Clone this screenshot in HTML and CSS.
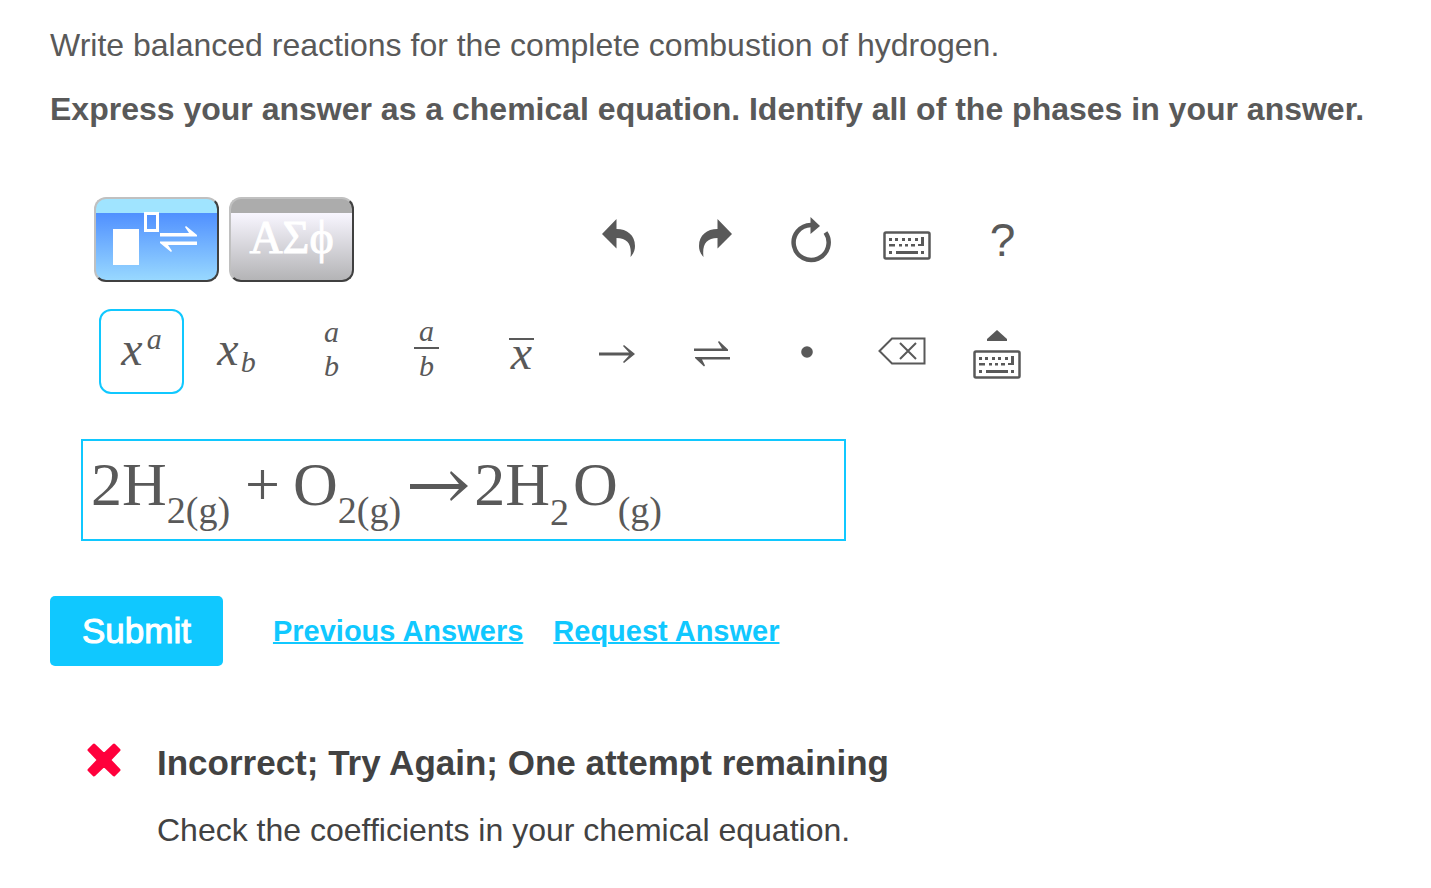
FILE: index.html
```html
<!DOCTYPE html>
<html lang="en">
<head>
    <meta charset="utf-8">
    <title>Combustion of hydrogen</title>
    <link rel="stylesheet" href="styles.css">
</head>
<body>
    <svg class="symbols" width="0" height="0" aria-hidden="true">
        <symbol id="keyboard" viewBox="0 0 48 29">
            <rect x="1.500" y="1.500" width="45" height="26" rx="1.500" fill="none" stroke="currentColor" stroke-width="2.500"/>
            <path fill="currentColor" d="M6 7h3v3H6zM12 7h3v3h-3zM19 7h3v3h-3zM25 7h3v3h-3zM32 7h3v3h-3zM38 6h3v9h-6v-2h3zM6 13h6v2.500H6zM16 13h3v2.500h-3zM22 13h3v2.500h-3zM28 13h4v2.500h-4zM6 20h3v3H6zM13 20h22v3H13zM38 20h3v3h-3z"/>
        </symbol>
    </svg>

    <p class="question">Write balanced reactions for the complete combustion of hydrogen.</p>
    <p class="instructions">Express your answer as a chemical equation. Identify all of the phases in your answer.</p>

    <form onsubmit="event.preventDefault()">
        <div class="toolbar palettes">
            <button type="button" class="palette palette-active" aria-label="Templates">
                <svg width="121" height="81" viewBox="0 0 121 81">
                    <path fill="#fff" d="M17 30h26v36H17z"/>
                    <rect x="49.500" y="14.500" width="12" height="17" fill="none" stroke="#fff" stroke-width="3"/>
                    <path fill="#fff" d="M64 34h29l-4-6 1-1 11 9v1.500H64zM101 46H72l4 6-1 1-11-9v-1.500h37z"/>
                </svg>
            </button>
            <button type="button" class="palette greek">ΑΣϕ</button>
            <div class="actions">
                <button type="button" class="tool" aria-label="Undo">
                    <svg width="34" height="42" viewBox="0 0 34 42"><path fill="currentColor" d="M0 15 14.500 0v10C25 10 33 16 33 27c0 4-1 7-4.500 11C30 26 26 19 14.500 19v10.500z"/></svg>
                </button>
                <button type="button" class="tool" aria-label="Redo">
                    <svg width="34" height="42" viewBox="0 0 34 42"><path fill="currentColor" d="M34 15 19.500 0v10C9 10 1 16 1 27c0 4 1 7 4.500 11C4 26 8 19 19.500 19v10.500z"/></svg>
                </button>
                <button type="button" class="tool" aria-label="Reset">
                    <svg width="40" height="46" viewBox="0 0 40 46">
                        <path fill="none" stroke="currentColor" stroke-width="4.500" d="M20 8A17.500 17.500 0 1 0 34.500 15.500"/>
                        <path fill="currentColor" d="M19.500 0 29 9l-9.500 8z"/>
                    </svg>
                </button>
                <button type="button" class="tool" aria-label="Keyboard shortcuts">
                    <svg class="keyboard-icon" width="48" height="29"><use href="#keyboard"/></svg>
                </button>
                <button type="button" class="tool help">?</button>
            </div>
        </div>

        <div class="toolbar templates">
            <button type="button" class="tool math selected"><i>x</i><i class="script above">a</i></button>
            <button type="button" class="tool math"><i>x</i><i class="script below">b</i></button>
            <button type="button" class="tool math stack"><i>a</i><i>b</i></button>
            <button type="button" class="tool math stack fraction"><i>a</i><i>b</i></button>
            <button type="button" class="tool"><i class="bar">x</i></button>
            <button type="button" class="tool arrow" aria-label="Reaction arrow">
                <svg width="36" height="18" viewBox="0 0 36 18"><path fill="currentColor" d="M0 7.500h30L24 1l1-1 11 9-11 9-1-1 6-6.500H0z"/></svg>
            </button>
            <button type="button" class="tool arrow" aria-label="Equilibrium arrows">
                <svg width="36" height="26" viewBox="0 0 36 26"><path fill="currentColor" d="M0 7.500h28L24 1l1-1 9 8.500v1.500H0zM36 18.500H8l3 6-1 1-9-8.500v-1h35z"/></svg>
            </button>
            <button type="button" class="tool" aria-label="Dot">
                <svg width="12" height="12" viewBox="0 0 12 12"><circle cx="6" cy="6" r="5.800" fill="currentColor"/></svg>
            </button>
            <button type="button" class="tool" aria-label="Delete">
                <svg width="48" height="30" viewBox="0 0 48 30"><path fill="none" stroke="currentColor" stroke-width="2" d="M1.500 14 14 1.500h32.500v25H14zM22 6l16 16M38 6 22 22"/></svg>
            </button>
            <button type="button" class="tool keyboard-toggle" aria-label="Show keyboard">
                <svg width="20" height="11" viewBox="0 0 20 11"><path fill="currentColor" d="M10 0 20 9v2H0V9z"/></svg>
                <svg width="48" height="29"><use href="#keyboard"/></svg>
            </button>
        </div>

        <div class="answer" role="textbox" aria-label="Answer" contenteditable="true" spellcheck="false"><span>2H<sub>2(g)</sub></span><span class="plus">+</span><span>O<sub>2(g)</sub></span><svg class="yields" width="58" height="30" viewBox="0 0 58 30"><path fill="currentColor" d="M0 13h49l-9-11 1-2 17 15-17 15-1-2 9-10H0z"/></svg><span>2H<sub class="low">2</sub>O<sub>(g)</sub></span></div>

        <div class="submit-row">
            <button type="submit" class="submit">Submit</button>
            <a href="#previous">Previous Answers</a>
            <a href="#request">Request Answer</a>
        </div>
    </form>

    <div class="feedback">
        <svg class="cross" width="34" height="34" viewBox="0 0 34 34"><path fill="#ff003c" stroke="#ff003c" stroke-width="3" stroke-linejoin="round" d="m7 2 10 9.500L27 2l5 5-9.500 10L32 27l-5 5-10-9.500L7 32l-5-5 9.500-10L2 7z"/></svg>
        <div>
            <h2>Incorrect; Try Again; One attempt remaining</h2>
            <p>Check the coefficients in your chemical equation.</p>
        </div>
    </div>
</body>
</html>
```

FILE: styles.css
```css
body {
    margin: 0;
    padding: 25px 0 36px 50px;
    font-family: "Liberation Sans", Arial, sans-serif;
    color: #595959;
    background-color: #fff;
}

p,
h2 {
    margin: 0;
    line-height: 40px;
}

.symbols {
    display: block;
}

.question {
    font-size: 32px;
}

.instructions {
    margin-top: 24px;
    font-size: 32px;
    font-weight: bold;
}

button {
    padding: 0;
    border: none;
    background: none;
    color: inherit;
    cursor: pointer;
}

.toolbar {
    display: flex;
    align-items: center;
    gap: 10px;
}

.palettes {
    margin: 68px 0 0 44px;
}

.palette {
    box-sizing: border-box;
    width: 125px;
    height: 85px;
    border: 2px solid;
    border-color: #c0c0c0 #404040 #404040 #c0c0c0;
    border-radius: 12px;
    background: linear-gradient(#acacac 14px, #f8f6ff 14px, #b4b4b6);
    overflow: hidden;
}

.palette svg {
    display: block;
}

.palette-active {
    background: linear-gradient(#a0e4ff 14px, #5090ff 14px, #98d8ff);
}

.greek {
    padding-bottom: 4px;
    font-family: "Liberation Serif", "Times New Roman", serif;
    font-size: 46px;
    line-height: 76px;
    color: #fff;
    -webkit-text-stroke: 1px;
}

.actions {
    display: flex;
    gap: 11px;
    margin-left: 212px;
}

.tool {
    display: flex;
    justify-content: center;
    align-items: center;
    box-sizing: border-box;
    width: 85px;
    height: 85px;
    border-radius: 12px;
    font-family: "Liberation Serif", "Times New Roman", serif;
    font-size: 48px;
    line-height: 48px;
}

.help {
    font-family: "Liberation Sans", Arial, sans-serif;
    font-size: 46px;
}

.keyboard-icon {
    margin-top: 12px;
}

.templates {
    margin: 27px 0 0 49px;
}

.math {
    padding-bottom: 6px;
}

.selected {
    border: 2px solid #10c8ff;
}

.script {
    font-size: 30px;
}

.above {
    padding: 0 0 20px 4px;
}

.below {
    padding: 26px 0 0 2px;
}

.stack {
    flex-direction: column;
    font-size: 30px;
    line-height: 34px;
}

.fraction i:first-child {
    width: 25px;
    box-sizing: border-box;
    height: 34px;
    border-bottom: 2px solid;
    line-height: 32px;
}

.bar {
    width: 25px;
    border-top: 2px solid;
    line-height: 25px;
}

.arrow {
    padding-top: 5px;
}

.keyboard-toggle {
    flex-direction: column;
    gap: 9px;
    padding-top: 5px;
}

.answer {
    display: flex;
    align-items: center;
    box-sizing: border-box;
    width: 765px;
    max-width: 100%;
    min-height: 102px;
    margin: 45px 0 0 31px;
    padding: 0 8px 12px;
    border: 2px solid #10c8ff;
    font-family: "Liberation Serif", "Times New Roman", serif;
    font-size: 62px;
    line-height: 80px;
    outline: none;
}

.answer sub {
    font-size: 38px;
    line-height: 0;
    vertical-align: -18px;
}

.answer .low {
    margin-right: 4px;
    vertical-align: -20px;
}

.plus {
    margin: 0 13px 0 15px;
}

.yields {
    margin: 4px 6px 0 9px;
}

.submit-row {
    display: flex;
    align-items: center;
    gap: 30px;
    margin-top: 55px;
}

.submit {
    margin-right: 20px;
    padding: 0 32px;
    border-radius: 5px;
    background-color: #10c8ff;
    color: #fff;
    font-family: inherit;
    font-size: 35px;
    line-height: 70px;
    -webkit-text-stroke: 1px;
}

.submit-row a {
    font-size: 29px;
    font-weight: bold;
    color: #10c8ff;
    text-decoration-thickness: 2px;
}

.feedback {
    display: flex;
    align-items: flex-start;
    gap: 36px;
    margin: 77px 0 0 37px;
    color: #424242;
}

.feedback h2 {
    font-size: 35px;
}

.feedback p {
    margin-top: 27px;
    font-size: 32px;
}
```
